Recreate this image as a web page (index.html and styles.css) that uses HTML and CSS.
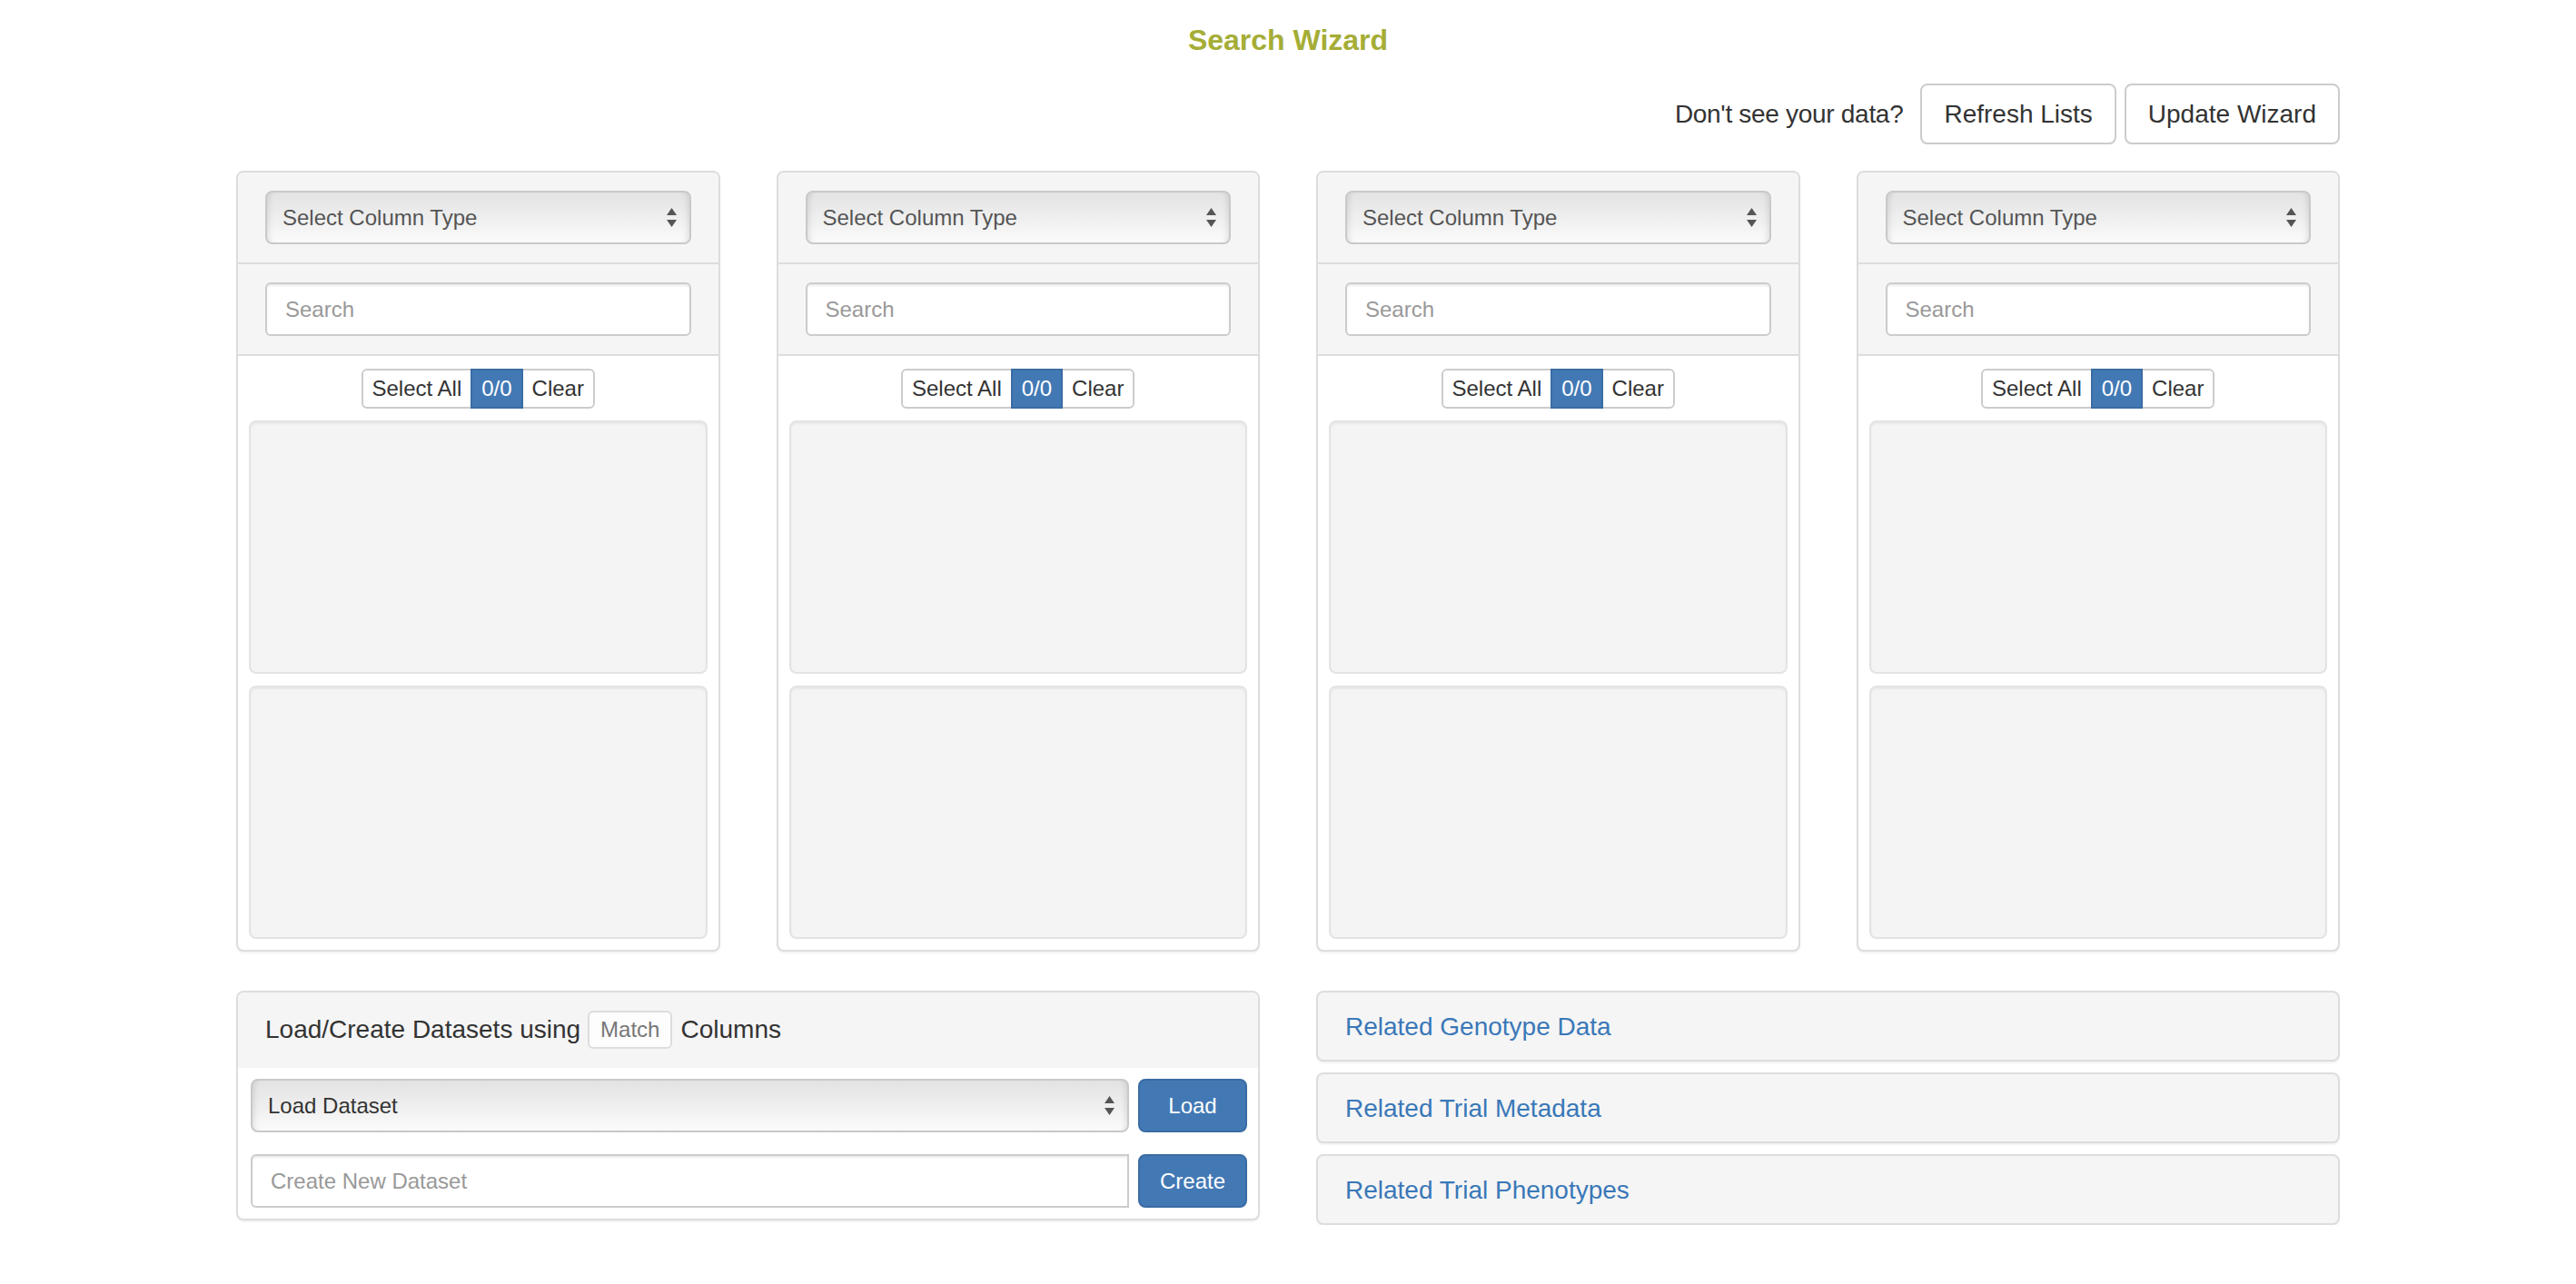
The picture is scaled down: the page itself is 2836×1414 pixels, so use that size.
FILE: index.html
```html
<!DOCTYPE html>
<html>
<head>
<meta charset="utf-8">
<title>Search Wizard</title>
<link rel="stylesheet" href="styles.css">
</head>
<body>
<h1 class="title">Search Wizard</h1>
<div class="container">
  <div class="toolbar">
    <span class="toolbar-text">Don't see your data?</span>
    <button class="btn">Refresh Lists</button>
    <button class="btn">Update Wizard</button>
  </div>

  <div class="columns">
    <div class="panel wiz-col">
      <div class="wiz-head">
        <div class="select-box"><span>Select Column Type</span><svg class="arrows" width="11" height="22" viewBox="0 0 11 22"><polygon points="0,8 5.5,0 11,8"/><polygon points="0,13 11,13 5.5,21"/></svg></div>
      </div>
      <div class="wiz-search"><div class="input"><span class="ph">Search</span></div></div>
      <div class="wiz-body">
        <div class="btn-group"><span class="bx">Select All</span><span class="bx bx-primary">0/0</span><span class="bx">Clear</span></div>
        <div class="well"></div>
        <div class="well"></div>
      </div>
    </div>
    <div class="panel wiz-col">
      <div class="wiz-head">
        <div class="select-box"><span>Select Column Type</span><svg class="arrows" width="11" height="22" viewBox="0 0 11 22"><polygon points="0,8 5.5,0 11,8"/><polygon points="0,13 11,13 5.5,21"/></svg></div>
      </div>
      <div class="wiz-search"><div class="input"><span class="ph">Search</span></div></div>
      <div class="wiz-body">
        <div class="btn-group"><span class="bx">Select All</span><span class="bx bx-primary">0/0</span><span class="bx">Clear</span></div>
        <div class="well"></div>
        <div class="well"></div>
      </div>
    </div>
    <div class="panel wiz-col">
      <div class="wiz-head">
        <div class="select-box"><span>Select Column Type</span><svg class="arrows" width="11" height="22" viewBox="0 0 11 22"><polygon points="0,8 5.5,0 11,8"/><polygon points="0,13 11,13 5.5,21"/></svg></div>
      </div>
      <div class="wiz-search"><div class="input"><span class="ph">Search</span></div></div>
      <div class="wiz-body">
        <div class="btn-group"><span class="bx">Select All</span><span class="bx bx-primary">0/0</span><span class="bx">Clear</span></div>
        <div class="well"></div>
        <div class="well"></div>
      </div>
    </div>
    <div class="panel wiz-col">
      <div class="wiz-head">
        <div class="select-box"><span>Select Column Type</span><svg class="arrows" width="11" height="22" viewBox="0 0 11 22"><polygon points="0,8 5.5,0 11,8"/><polygon points="0,13 11,13 5.5,21"/></svg></div>
      </div>
      <div class="wiz-search"><div class="input"><span class="ph">Search</span></div></div>
      <div class="wiz-body">
        <div class="btn-group"><span class="bx">Select All</span><span class="bx bx-primary">0/0</span><span class="bx">Clear</span></div>
        <div class="well"></div>
        <div class="well"></div>
      </div>
    </div>
  </div>

  <div class="bottom">
    <div class="panel dataset">
      <div class="dataset-head">Load/Create Datasets using <span class="match">Match</span> Columns</div>
      <div class="dataset-body">
        <div class="ds-row">
          <div class="select-box ds-select"><span>Load Dataset</span><svg class="arrows" width="11" height="22" viewBox="0 0 11 22"><polygon points="0,8 5.5,0 11,8"/><polygon points="0,13 11,13 5.5,21"/></svg></div>
          <span class="btn-primary">Load</span>
        </div>
        <div class="ds-row">
          <div class="input ds-input"><span class="ph">Create New Dataset</span></div>
          <span class="btn-primary">Create</span>
        </div>
      </div>
    </div>
    <div class="related">
      <div class="panel rel"><a class="rel-link">Related Genotype Data</a></div>
      <div class="panel rel"><a class="rel-link">Related Trial Metadata</a></div>
      <div class="panel rel"><a class="rel-link">Related Trial Phenotypes</a></div>
    </div>
  </div>
</div>
</body>
</html>
```

FILE: styles.css
```css
* { box-sizing: border-box; }

body {
  margin: 0;
  background: #fff;
  color: #333;
  font-family: "Liberation Sans", Arial, sans-serif;
  font-size: 28px;
}

.title {
  margin: 0;
  padding-top: 27px;
  text-align: center;
  font-size: 32px;
  line-height: 35px;
  font-weight: bold;
  color: #a5ad36;
}

.container {
  width: 2316px;
  margin: 0 auto;
}

.toolbar {
  display: flex;
  justify-content: flex-end;
  align-items: center;
  margin-top: 30px;
  margin-bottom: 29px;
}

.toolbar-text {
  margin-right: 10px;
  color: #333;
  letter-spacing: -0.3px;
}

.btn {
  font-family: inherit;
  font-size: 28px;
  line-height: 39px;
  padding: 12px 24px;
  border: 2px solid #ccc;
  border-radius: 8px;
  background: #fff;
  color: #333;
  margin-left: 9px;
}

.columns {
  display: grid;
  grid-template-columns: repeat(4, 1fr);
  column-gap: 62px;
}

.panel {
  border: 2px solid #ddd;
  border-radius: 8px;
  background: #fff;
  box-shadow: 0 2px 2px rgba(0, 0, 0, 0.05);
  overflow: hidden;
}

.wiz-head,
.wiz-search {
  background: #f5f5f5;
  padding: 20px 30px;
  border-bottom: 2px solid #ddd;
}

.select-box {
  height: 59px;
  display: flex;
  align-items: center;
  justify-content: space-between;
  padding: 0 14px 0 17px;
  border: 2px solid #c9c9c9;
  border-radius: 8px;
  background: linear-gradient(#e3e3e3, #ececec 40%, #fbfbfb);
  box-shadow: inset 7px 0 6px -5px rgba(0, 0, 0, 0.10), inset -7px 0 6px -5px rgba(0, 0, 0, 0.10);
  font-size: 24px;
  color: #555;
}

.arrows { fill: #555; display: block; }

.input {
  height: 59px;
  display: flex;
  align-items: center;
  padding: 0 20px;
  border: 2px solid #ccc;
  border-radius: 6px;
  background: #fff;
  box-shadow: inset 0 2px 2px rgba(0, 0, 0, 0.075);
  font-size: 24px;
}

.ph { color: #999; }

.wiz-body {
  padding: 14px 12px 12px;
  display: flex;
  flex-direction: column;
  align-items: stretch;
}

.btn-group {
  display: flex;
  justify-content: center;
  margin-bottom: 13px;
}

.bx {
  font-size: 24px;
  line-height: 36px;
  padding: 2px 10px;
  border: 2px solid #ccc;
  background: #fff;
  color: #333;
  margin-left: -2px;
}

.bx:first-child { border-radius: 6px 0 0 6px; margin-left: 0; }
.bx:last-child { border-radius: 0 6px 6px 0; }

.bx-primary {
  background: #4279b5;
  border-color: #3a6ca3;
  color: #fff;
  position: relative;
}

.well {
  height: 279px;
  background: #f4f4f4;
  border: 2px solid #e3e3e3;
  border-radius: 8px;
  box-shadow: inset 0 2px 2px rgba(0, 0, 0, 0.05);
}

.well + .well { margin-top: 13px; }

.bottom {
  display: grid;
  grid-template-columns: 1fr 1fr;
  column-gap: 62px;
  margin-top: 43px;
  align-items: start;
}

.dataset-head {
  background: #f5f5f5;
  padding: 20px 30px 21px;
  display: flex;
  align-items: center;
  font-size: 28px;
  line-height: 42px;
  color: #333;
}

.match {
  display: inline-block;
  height: 42px;
  line-height: 38px;
  padding: 0 12px;
  margin: 0 9px 0 8px;
  border: 2px solid #ddd;
  border-radius: 6px;
  background: #fdfdfd;
  color: #777;
  font-size: 24px;
}

.dataset-body {
  padding: 12px 12px 12px 14px;
}

.ds-row {
  display: flex;
  gap: 10px;
}

.ds-row + .ds-row { margin-top: 24px; }

.ds-select { flex: 1; color: #333; }

.ds-input { flex: 1; border-radius: 6px 0 0 6px; }

.btn-primary {
  width: 120px;
  height: 59px;
  display: flex;
  align-items: center;
  justify-content: center;
  background: #4279b5;
  border: 2px solid #3a6ca3;
  border-radius: 8px;
  color: #fff;
  font-size: 24px;
}

.related {
  display: flex;
  flex-direction: column;
  gap: 12px;
}

.rel {
  background: #f5f5f5;
  padding: 21px 30px 19px;
}

.rel-link {
  display: block;
  font-size: 28px;
  line-height: 34px;
  color: #3a78b8;
}
```
